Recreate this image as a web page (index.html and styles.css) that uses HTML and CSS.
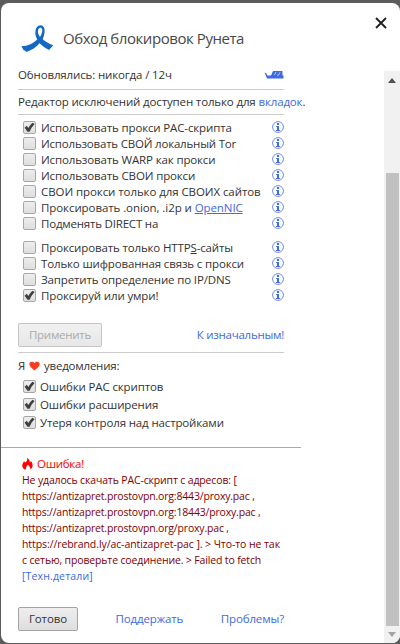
FILE: index.html
```html
<!DOCTYPE html>
<html lang="ru">
<head>
<meta charset="utf-8">
<title>Обход блокировок Рунета</title>
<link rel="stylesheet" href="styles.css">
</head>
<body>
<svg class="defs" width="0" height="0">
  <symbol id="tick" viewBox="0 0 13 13"><path d="M1.600 6.700 L3.800 4.800 L5.300 7 Q7.300 3.600 9.400 1.700 L11.600 3.100 Q8.500 6.300 6.600 10.700 L4.500 10.700 Z" fill="#3f3f3f"/></symbol>
  <symbol id="info" viewBox="0 0 12 12"><circle cx="6" cy="6" r="5.4" fill="#fff" stroke="#6a8ae8" stroke-width="1"/><path d="M5 2h2v2H5zM4.200 5h2.800v4h.9v1H4.100v-1h.9v-3h-.8z" fill="#4169e1"/></symbol>
</svg>
<main class="dialog">
  <header class="head">
    <svg class="logo" viewBox="0 0 34 30"><path fill-rule="evenodd" d="M17.300 15.300C15 12 15 7.500 16 4.800 17 2.300 18.800 1.300 20.600 1.300 23.500 1.400 25 4.400 24.600 8 24.300 11 23.500 13.300 22.700 15.300 26 18.200 29.500 20 33.300 21.200L29 26C25.500 24.300 22 21.800 19.500 19.300 16 23.500 11 26.600 6.300 28L5 26.600 3.900 26.600 1.300 22.300C8 22 13.500 19.600 17.300 15.300ZM20 13C21.700 10.500 22.600 7.800 22.200 5.600 21.700 3.500 19.600 3.200 18.400 5.200 17.300 7.600 18 10.500 20 13Z" fill="#1567c4"/></svg>
    <h1>Обход блокировок Рунета</h1>
    <svg class="close" viewBox="0 0 12 12"><path d="M1 1l10 10M11 1L1 11" stroke="#222" stroke-width="1.9" fill="none"/></svg>
  </header>
  <div class="view">
    <div class="content">
      <div class="updated"><span>Обновлялись: никогда / 12ч</span><svg viewBox="0 0 20 8"><path d="M.5 1.500l2 1 .8 2H7L9 0h9.500v4.500H19.500V7.500H3L2 5z" fill="#4169e1"/><path d="M10.500 4l1.500-3M13 4.200h1.500l1.500-3" stroke="#fff" stroke-width=".6" fill="none"/></svg></div>
      <div class="editor">Редактор исключений доступен только для <a>вкладок</a>.</div>
      <section class="options">
        <div class="row"><i class="box"><svg><use href="#tick"/></svg></i><span>Использовать прокси PAC-скрипта</span><svg class="info"><use href="#info"/></svg></div>
        <div class="row"><i class="box"></i><span class="tight">Использовать СВОЙ локальный Tor</span><svg class="info"><use href="#info"/></svg></div>
        <div class="row"><i class="box"></i><span>Использовать WARP как прокси</span><svg class="info"><use href="#info"/></svg></div>
        <div class="row"><i class="box"></i><span>Использовать СВОИ прокси</span><svg class="info"><use href="#info"/></svg></div>
        <div class="row"><i class="box"></i><span class="loose">СВОИ прокси только для СВОИХ сайтов</span><svg class="info"><use href="#info"/></svg></div>
        <div class="row"><i class="box"></i><span class="loose">Проксировать .onion, .i2p и <a class="line">OpenNIC</a></span><svg class="info"><use href="#info"/></svg></div>
        <div class="row"><i class="box"></i><span class="tight">Подменять DIRECT на</span><svg class="info"><use href="#info"/></svg></div>
      </section>
      <section class="options second">
        <div class="row"><i class="box"></i><span>Проксировать только HTTP<u>S</u>-сайты</span><svg class="info"><use href="#info"/></svg></div>
        <div class="row"><i class="box"></i><span>Только шифрованная связь с прокси</span><svg class="info"><use href="#info"/></svg></div>
        <div class="row"><i class="box"></i><span>Запретить определение по IP/DNS</span><svg class="info"><use href="#info"/></svg></div>
        <div class="row"><i class="box"><svg><use href="#tick"/></svg></i><span>Проксируй или умри!</span><svg class="info"><use href="#info"/></svg></div>
      </section>
      <div class="apply"><button class="off" disabled>Применить</button><a>К изначальным!</a></div>
      <section class="notify">
        <div class="love">Я <svg viewBox="0 0 12 10"><path d="M6 10C3 7.500.4 5.500.4 2.900.4 0 4.500-.6 6 2 7.500-.6 11.600 0 11.600 2.900 11.600 5.500 9 7.500 6 10z" fill="#fb3b1e"/></svg> уведомления:</div>
        <div class="row"><i class="box"><svg><use href="#tick"/></svg></i><span>Ошибки PAC скриптов</span></div>
        <div class="row"><i class="box"><svg><use href="#tick"/></svg></i><span>Ошибки расширения</span></div>
        <div class="row"><i class="box"><svg><use href="#tick"/></svg></i><span>Утеря контроля над настройками</span></div>
      </section>
      <section class="error">
        <h2><svg viewBox="0 0 11 12"><path d="M5 0C8 1.500 7.500 3.500 8 4.500L9 3C11 5.500 11.500 9 8.500 11.500 8.500 9 7 8 5.800 6.500 5.500 8 3.500 8.500 3.800 11.800 1 11-.5 8.500.6 6 1.200 4.500 1.800 4 2 3L3 4.500C4.800 3.500 5.500 2 5 0Z" fill="#f00"/></svg>Ошибка!</h2>
        <p><span class="e1">Не удалось скачать PAC-скрипт с адресов: [</span><br>
        <span class="e2">https://antizapret.prostovpn.org:8443/proxy.pac ,</span><br>
        <span class="e2">https://antizapret.prostovpn.org:18443/proxy.pac ,</span><br>
        <span class="e2">https://antizapret.prostovpn.org/proxy.pac ,</span><br>
        <span class="e3">https://rebrand.ly/ac-antizapret-pac ]. &gt; Что-то не так</span><br>
        <span class="e1">с сетью, проверьте соединение. &gt; Failed to fetch</span><br>
        <a>[Техн.детали]</a></p>
      </section>
      <footer class="foot"><button>Готово</button><a>Поддержать</a><a>Проблемы?</a></footer>
    </div>
    <div class="scroll"><i class="up"></i><div class="thumb"></div><i class="down"></i></div>
  </div>
</main>
</body>
</html>
```
FILE: styles.css
```css
* { box-sizing: border-box; }
body { margin: 0; height: 644px; padding: 3px 0 1px 1px; background: #5c5c5c; font: 11.5px/16px "Open Sans", "Noto Sans", sans-serif; letter-spacing: -.14px; color: #333; overflow: hidden; }
.defs { position: absolute; }
svg { display: block; flex: none; }
a { color: #4169e1; }
.dialog { height: 640px; background: #fff; border-radius: 8px; overflow: hidden; display: flex; flex-direction: column; }
.head { height: 68px; flex: none; display: flex; align-items: flex-start; padding: 14px 13px 0 19px; }
.logo { width: 34px; height: 30px; margin-top: 7px; }
h1 { margin: 9px 0 0 9px; font: 400 15px/24px "Open Sans", sans-serif; letter-spacing: -.44px; color: #484848; flex: 1; }
.close { width: 12px; height: 12px; }
.view { flex: 1; min-height: 0; display: flex; justify-content: space-between; }
.content { width: 300px; }
.updated { margin: 0 17px; height: 19px; overflow: hidden; border-bottom: 1px solid #ccc; display: flex; justify-content: space-between; }
.updated span { margin-top: -4px; }
.updated svg { width: 20px; height: 8px; }
.editor { margin: 0 17px; height: 25px; line-height: 23px; border-bottom: 1px solid #ccc; white-space: nowrap; }
.options { padding: 5px 17px 0 22px; }
.second { padding-top: 8px; }
.row { display: flex; align-items: center; height: 16px; white-space: nowrap; }
.row span { margin-left: 5px; }
.row .tight { letter-spacing: -.2px; }
.row .loose { letter-spacing: -.08px; }
.line { text-decoration: underline; }
.box { width: 13px; height: 13px; margin-bottom: 1px; flex: none; border: 1px solid #a8a8a8; border-radius: 2px; background: linear-gradient(#ededed, #dedede); }
.box svg { width: 13px; height: 13px; margin: -1px; }
.info { width: 12px; height: 12px; margin: 0 0 2px auto; }
.apply { display: flex; justify-content: space-between; align-items: center; margin: 19px 17px 0; height: 30px; padding-bottom: 5px; border-bottom: 1px solid #ccc; letter-spacing: -.25px; }
button { width: 60px; height: 24px; padding: 0; border: 1px solid #a3a3a3; border-radius: 2px; background: linear-gradient(#eee, #dedede); font: inherit; letter-spacing: -.1px; color: #333; }
.off { width: 84px; border-color: #c4c4c4; background: linear-gradient(#f1f1f1, #e7e7e7); color: #aaa; letter-spacing: -.25px; }
.notify { height: 94px; padding: 4px 17px 0; }
.love { display: flex; align-items: center; gap: 4px; height: 17px; letter-spacing: -.22px; }
.love svg { width: 11px; height: 10px; }
.notify .row { height: 18px; margin-left: 5px; }
.notify .row span { margin-left: 4px; }
.notify .love + .row { margin-top: 4px; }
.error { height: 145px; border-top: 1px solid #aaa; padding: 8px 0 0 21px; }
h2 { margin: 0; font: inherit; letter-spacing: -.25px; color: #f00; display: flex; align-items: center; height: 16px; }
h2 svg { width: 11px; height: 12px; margin-right: 4px; }
.error p { margin: 0; font-size: 10.5px; color: #800000; white-space: nowrap; }
.error p a { letter-spacing: .15px; }
.e1 { letter-spacing: -.15px; }
.e2 { letter-spacing: -.18px; }
.e3 { letter-spacing: -.08px; }
.foot { display: flex; justify-content: space-between; align-items: center; height: 24px; margin: 15px 17px 0; }
.scroll { width: 16px; background: #f1f1f1; display: flex; flex-direction: column; align-items: center; justify-content: space-between; padding: 7px 0 6px; }
.up { border: 4px solid transparent; border-top: 0; border-bottom: 5px solid #505050; }
.down { border: 4px solid transparent; border-bottom: 0; border-top: 5px solid #a3a3a3; }
.thumb { width: 13px; height: 453px; margin-top: 83px; background: #c1c1c1; }
```
